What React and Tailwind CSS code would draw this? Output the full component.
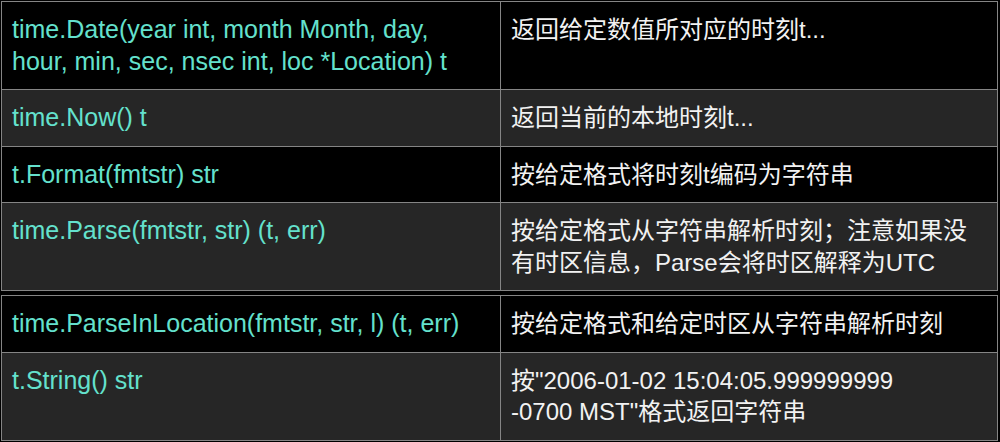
const FONT = { fontFamily: '"Liberation Sans", "Noto Sans CJK SC", sans-serif' };

const top = [
  {
    fn: ["time.Date(year int, month Month, day,", "hour, min, sec, nsec int, loc *Location) t"],
    desc: ["返回给定数值所对应的时刻t..."],
    bg: "bg-black",
  },
  { fn: ["time.Now() t"], desc: ["返回当前的本地时刻t..."], bg: "bg-[#262626]" },
  { fn: ["t.Format(fmtstr) str"], desc: ["按给定格式将时刻t编码为字符串"], bg: "bg-black" },
  {
    fn: ["time.Parse(fmtstr, str) (t, err)"],
    desc: ["按给定格式从字符串解析时刻；注意如果没", "有时区信息，Parse会将时区解释为UTC"],
    bg: "bg-[#262626]",
  },
];

const bottom = [
  {
    fn: ["time.ParseInLocation(fmtstr, str, l) (t, err)"],
    desc: ["按给定格式和给定时区从字符串解析时刻"],
    bg: "bg-black",
  },
  {
    fn: ["t.String() str"],
    desc: ['按"2006-01-02 15:04:05.999999999', '-0700 MST"格式返回字符串'],
    bg: "bg-[#262626]",
  },
];

function Lines({ lines }) {
  return lines.map((l, i) => (
    <span key={i} className="block whitespace-nowrap">
      {l}
    </span>
  ));
}

function Table({ rows }) {
  return (
    <div className="w-[997px] border border-[#858585]">
      {rows.map((r, i) => (
        <div
          key={i}
          className={`flex ${r.bg} ${i < rows.length - 1 ? "border-b border-[#858585]" : ""}`}
        >
          <div className="w-[499px] shrink-0 border-r border-[#858585] px-[10px] py-[12px] text-[25px] leading-[31.5px] text-[#64e1cd]">
            <Lines lines={r.fn} />
          </div>
          <div className="flex-1 px-[10px] py-[12px] text-[24px] leading-[31.5px] text-[#f2f2f2]">
            <Lines lines={r.desc} />
          </div>
        </div>
      ))}
    </div>
  );
}

export default function App() {
  return (
    <div className="w-[1000px] h-[442px] bg-black pt-[1px] pl-[1px] overflow-hidden" style={FONT}>
      <Table rows={top} />
      <div className="h-[4px]" />
      <Table rows={bottom} />
    </div>
  );
}
